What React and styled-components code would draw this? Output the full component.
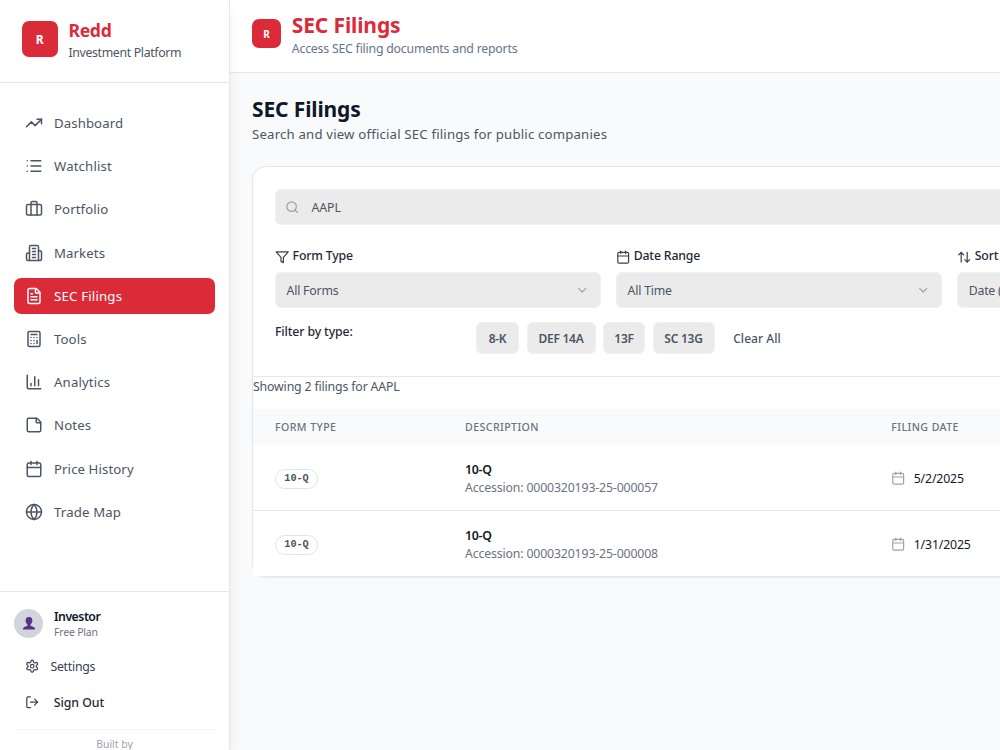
import styled, { createGlobalStyle } from "styled-components";
import {
  ArrowUpDown,
  Briefcase,
  Calculator,
  Calendar,
  ChevronDown,
  FileText,
  Globe,
  List,
  LogOut,
  Search,
  StickyNote,
  TrendingUp,
} from "lucide-react";

const GlobalStyle = createGlobalStyle`
  * {
    box-sizing: border-box;
  }

  body {
    margin: 0;
    background: #f9fafb;
    font-family: "Noto Sans", "Open Sans", sans-serif;
    overflow: hidden;
  }

  p, h1, h2 {
    margin: 0;
  }

  button {
    font-family: inherit;
  }

  svg {
    display: block;
    flex-shrink: 0;
  }
`;

const Text = styled.p`
  font-size: ${({ $size }) => $size || 12.3}px;
  line-height: ${({ $line }) => $line || 18}px;
  font-weight: ${({ $weight }) => $weight || 400};
  color: ${({ $color }) => $color || "#4b5563"};
  letter-spacing: ${({ $track }) => $track || 0}px;
  white-space: nowrap;
`;

const Page = styled.div`
  display: flex;
  height: 750px;
  overflow: hidden;
`;

const Sidebar = styled.aside`
  display: flex;
  flex-direction: column;
  flex: 0 0 230px;
  background: #fff;
  border-right: 1px solid #e5e7eb;
  box-shadow: 0 9px 14px -3px rgba(0, 0, 0, 0.1);
  z-index: 1;
`;

const Brand = styled.div`
  display: flex;
  align-items: flex-start;
  gap: 10.8px;
  height: 83px;
  padding: 21px 21.6px 0;
  border-bottom: 1px solid #e5e7eb;
`;

const Logo = styled.div`
  display: flex;
  align-items: center;
  justify-content: center;
  flex-shrink: 0;
  width: ${({ $size }) => $size}px;
  height: ${({ $size }) => $size}px;
  border-radius: 7px;
  background: #db2b39;
  color: #fff;
  font-size: ${({ $font }) => $font}px;
  font-weight: 700;
`;

const Nav = styled.nav`
  display: flex;
  flex-direction: column;
  flex: 1;
  gap: 7.2px;
  padding: 22.05px 14px;
`;

const NavItem = styled.a`
  display: flex;
  align-items: center;
  gap: 11px;
  height: 36px;
  padding: 0 11px;
  border-radius: 7px;
  font-size: 13.2px;
  letter-spacing: ${({ $track }) => $track || 0}px;
  color: ${({ $active }) => ($active ? "#fff" : "#4b5563")};
  background: ${({ $active }) => ($active ? "#db2b39" : "transparent")};
`;

const SidebarFooter = styled.div`
  height: 159px;
  padding: 16px 14px 0;
  border-top: 1px solid #e5e7eb;
`;

const User = styled.div`
  display: flex;
  gap: 11px;
  height: 40px;
`;

const Avatar = styled.div`
  display: flex;
  align-items: center;
  justify-content: center;
  width: 29px;
  height: 29px;
  margin-top: 1px;
  border-radius: 50%;
  background: #d1d5db;
`;

const FooterLink = styled.div`
  display: flex;
  align-items: center;
  gap: ${({ $gap }) => $gap}px;
  height: 36px;
  padding-left: 11px;
  color: #374151;

  ${Text} {
    padding-top: 1px;
  }
`;

const BuiltBy = styled.div`
  margin-top: 9px;
  padding-top: 5px;
  border-top: 1px solid #f3f4f6;
  text-align: center;
`;

const Main = styled.main`
  flex: 1 0 1030px;
`;

const TopBar = styled.header`
  display: flex;
  gap: 10.8px;
  height: 73px;
  padding: 12px 22px 0;
  background: #fff;
  border-bottom: 1px solid #e5e7eb;

  ${Logo} {
    margin-top: 7px;
  }
`;

const Content = styled.section`
  padding: 21px 22px;
`;

const Card = styled.div`
  height: 411px;
  margin-top: 22px;
  border: 1px solid #e5e7eb;
  border-radius: 14px;
  background: #fff;
  box-shadow: 0 1px 2px rgba(0, 0, 0, 0.07);
`;

const Filters = styled.div`
  height: 210px;
  padding: 22px;
  border-bottom: 1px solid #e5e7eb;
`;

const Field = styled.div`
  display: flex;
  align-items: center;
  justify-content: space-between;
  height: 36px;
  padding: 0 11px 0 10.5px;
  border: 1px solid #f1f1f1;
  border-radius: 6px;
  background: #ebebeb;
  color: #9ca3af;

  ${Text} {
    padding-top: 2px;
  }
`;

const SearchField = styled(Field)`
  justify-content: flex-start;
  gap: 12px;
  padding: 0 9px;
`;

const FieldGrid = styled.div`
  display: grid;
  grid-template-columns: repeat(3, 326.4px);
  gap: 14.7px;
  margin-top: 22px;
`;

const Label = styled.div`
  display: flex;
  align-items: center;
  gap: 3.2px;
  height: 18px;
  margin-bottom: 7px;
  color: #374151;

  svg {
    margin-top: 3px;
  }
`;

const Chips = styled.div`
  display: grid;
  grid-template-columns: 201px 1fr;
  margin-top: 14px;

  ${Text} {
    padding-top: 1px;
  }
`;

const ChipList = styled.div`
  display: flex;
  gap: 7.5px;
`;

const Chip = styled.button`
  width: ${({ $width }) => $width}px;
  height: 32px;
  padding: 0;
  border: 1px solid ${({ $plain }) => ($plain ? "transparent" : "#f1f1f1")};
  border-radius: 6px;
  background: ${({ $plain }) => ($plain ? "transparent" : "#ebebeb")};
  color: #4b5563;
  font-size: 12px;
  font-weight: ${({ $plain }) => ($plain ? 500 : 600)};
  letter-spacing: ${({ $plain }) => ($plain ? 0.05 : -0.25)}px;
  white-space: nowrap;
`;

const Row = styled.div`
  display: grid;
  grid-template-columns: 190px 426.3px 1fr;
  align-items: center;
  height: 66px;
  padding: 0 22px;
  background: #fff;
  border-bottom: 1px solid #e5e7eb;

  &:last-child {
    height: 65px;
    border-bottom: 0;
  }
`;

const HeadRow = styled(Row)`
  height: 36px;
  margin-top: 13px;
  background: #f9fafb;
  border-bottom: 0;
`;

const Badge = styled.span`
  display: flex;
  align-items: center;
  justify-content: center;
  width: 43px;
  height: 20px;
  margin-top: 2px;
  border: 1px solid #e2e4e6;
  border-radius: 10px;
  color: #4b5563;
  font: 700 10.2px "Liberation Mono", monospace;
`;

const Description = styled.div`
  padding-top: 2px;
`;

const DateCell = styled.div`
  display: flex;
  align-items: center;
  gap: 8px;
  padding-top: 1px;
  color: #9ca3af;

  ${Text} {
    padding-top: 1px;
  }
`;

const FunnelIcon = () => (
  <svg width="14.4" height="14.4" viewBox="0 0 24 24" fill="none" stroke="currentColor" strokeWidth="2" strokeLinejoin="round">
    <polygon points="22 3 2 3 10 12.46 10 19 14 21 14 12.46 22 3" />
  </svg>
);

const GearIcon = () => (
  <svg width="14.4" height="14.4" viewBox="0 0 24 24" fill="none" stroke="currentColor" strokeWidth="2" strokeLinecap="round" strokeLinejoin="round">
    <path d="M12.22 2h-.44a2 2 0 0 0-2 2v.18a2 2 0 0 1-1 1.73l-.43.25a2 2 0 0 1-2 0l-.15-.08a2 2 0 0 0-2.73.73l-.22.38a2 2 0 0 0 .73 2.73l.15.1a2 2 0 0 1 1 1.72v.51a2 2 0 0 1-1 1.74l-.15.09a2 2 0 0 0-.73 2.73l.22.38a2 2 0 0 0 2.73.73l.15-.08a2 2 0 0 1 2 0l.43.25a2 2 0 0 1 1 1.73V20a2 2 0 0 0 2 2h.44a2 2 0 0 0 2-2v-.18a2 2 0 0 1 1-1.73l.43-.25a2 2 0 0 1 2 0l.15.08a2 2 0 0 0 2.73-.73l.22-.39a2 2 0 0 0-.73-2.73l-.15-.08a2 2 0 0 1-1-1.74v-.5a2 2 0 0 1 1-1.74l.15-.09a2 2 0 0 0 .73-2.73l-.22-.38a2 2 0 0 0-2.73-.73l-.15.08a2 2 0 0 1-2 0l-.43-.25a2 2 0 0 1-1-1.73V4a2 2 0 0 0-2-2z" />
    <circle cx="12" cy="12" r="3" />
  </svg>
);

const PersonIcon = () => (
  <svg width="12" height="13" viewBox="0 0 12 13" fill="#553285">
    <path d="M6 0C3.8 0 2.8 1.3 2.8 3.1c-.6.3-.3 1.5.2 1.8.2 1.3.8 2 1.5 2.6v1.2L1.3 10C.4 10.4 0 11.2 0 12.5h12c0-1.3-.4-2.1-1.3-2.5L7.5 8.7V7.5c.7-.6 1.3-1.3 1.5-2.6.5-.3.8-1.5.2-1.8C9.2 1.3 8.2 0 6 0z" />
  </svg>
);

const BarsIcon = ({ size }) => (
  <svg width={size} height={size} viewBox="0 0 24 24" fill="none" stroke="currentColor" strokeWidth="2" strokeLinecap="round" strokeLinejoin="round">
    <path d="M3 3v16a2 2 0 0 0 2 2h16M18 17V9M13 17V5M8 17v-3" />
  </svg>
);

const BuildingIcon = ({ size }) => (
  <svg width={size} height={size} viewBox="0 0 24 24" fill="none" stroke="currentColor" strokeWidth="2" strokeLinecap="round" strokeLinejoin="round">
    <path d="M6 22V4a2 2 0 0 1 2-2h8a2 2 0 0 1 2 2v18Z" />
    <path d="M6 12H4a2 2 0 0 0-2 2v6a2 2 0 0 0 2 2h2M18 9h2a2 2 0 0 1 2 2v9a2 2 0 0 1-2 2h-2" />
    <path d="M10 6h4M10 10h4M10 14h4M10 18h4" />
  </svg>
);

const navItems = [
  { label: "Dashboard", icon: TrendingUp, track: 0.1 },
  { label: "Watchlist", icon: List, track: 0.15 },
  { label: "Portfolio", icon: Briefcase, track: 0.1 },
  { label: "Markets", icon: BuildingIcon, track: 0.1 },
  { label: "SEC Filings", icon: FileText, track: 0.2, active: true },
  { label: "Tools", icon: Calculator, track: 0.1 },
  { label: "Analytics", icon: BarsIcon, track: 0.15 },
  { label: "Notes", icon: StickyNote, track: 0.15 },
  { label: "Price History", icon: Calendar, track: 0.1 },
  { label: "Trade Map", icon: Globe, track: 0.15 },
];

const fields = [
  { label: "Form Type", value: "All Forms", icon: FunnelIcon },
  { label: "Date Range", value: "All Time", icon: Calendar },
  { label: "Sort By", value: "Date (Newest)", icon: ArrowUpDown },
];

const columns = ["FORM TYPE", "DESCRIPTION", "FILING DATE"];

const filings = [
  { form: "10-Q", accession: "0000320193-25-000057", date: "5/2/2025" },
  { form: "10-Q", accession: "0000320193-25-000008", date: "1/31/2025" },
];

const App = () => {
  return (
    <Page>
      <GlobalStyle />
      <Sidebar>
        <Brand>
          <Logo $size={36} $font={12}>R</Logo>
          <div>
            <Text as="h2" $size={17.6} $line={19} $weight={700} $color="#db2b39" $track={-0.3}>Redd</Text>
            <Text $line={25} $track={-0.33}>Investment Platform</Text>
          </div>
        </Brand>
        <Nav>
          {navItems.map(({ label, icon: Icon, active, track }) => (
            <NavItem key={label} $active={active} $track={track}>
              <Icon size={18} />
              {label}
            </NavItem>
          ))}
        </Nav>
        <SidebarFooter>
          <User>
            <Avatar>
              <PersonIcon />
            </Avatar>
            <div>
              <Text $weight={600} $color="#111827" $track={-0.5}>Investor</Text>
              <Text $size={10.4} $line={13} $color="#6b7280" $track={-0.15}>Free Plan</Text>
            </div>
          </User>
          <FooterLink $gap={11}>
            <GearIcon />
            <Text $color="#374151" $track={-0.25}>Settings</Text>
          </FooterLink>
          <FooterLink $gap={14.4}>
            <LogOut size={14.4} />
            <Text $weight={500} $color="#1f2937" $track={-0.05}>Sign Out</Text>
          </FooterLink>
          <BuiltBy>
            <Text $size={10.4} $color="#9ca3af">Built by</Text>
          </BuiltBy>
        </SidebarFooter>
      </Sidebar>
      <Main>
        <TopBar>
          <Logo $size={29} $font={10}>R</Logo>
          <div>
            <Text as="h1" $size={21} $line={26} $weight={700} $color="#db2b39" $track={-0.13}>SEC Filings</Text>
            <Text $line={21} $color="#64748b" $track={-0.21}>Access SEC filing documents and reports</Text>
          </div>
        </TopBar>
        <Content>
          <Text as="h2" $size={21} $line={30} $weight={700} $color="#0f172a" $track={-0.13}>SEC Filings</Text>
          <Text $size={13.2} $line={20} $track={0.185}>Search and view official SEC filings for public companies</Text>
          <Card>
            <Filters>
              <SearchField>
                <Search size={14.4} />
                <Text $track={-0.05}>AAPL</Text>
              </SearchField>
              <FieldGrid>
                {fields.map(({ label, value, icon: Icon }) => (
                  <div key={label}>
                    <Label>
                      <Icon size={14.4} />
                      <Text $weight={500} $color="#1f2937" $track={-0.17}>{label}</Text>
                    </Label>
                    <Field>
                      <Text $track={-0.2}>{value}</Text>
                      <ChevronDown size={14.4} />
                    </Field>
                  </div>
                ))}
              </FieldGrid>
              <Chips>
                <Text $weight={500} $color="#1f2937" $track={-0.13}>Filter by type:</Text>
                <ChipList>
                  <Chip $width={43}>8-K</Chip>
                  <Chip $width={69}>DEF 14A</Chip>
                  <Chip $width={42}>13F</Chip>
                  <Chip $width={62}>SC 13G</Chip>
                  <Chip $width={70} $plain>Clear All</Chip>
                </ChipList>
              </Chips>
            </Filters>
            <Text $line={19} $track={-0.15}>Showing 2 filings for AAPL</Text>
            <HeadRow>
              {columns.map((column) => (
                <Text key={column} $size={10.6} $weight={500} $color="#6b7280" $track={0.42}>{column}</Text>
              ))}
            </HeadRow>
            {filings.map(({ form, accession, date }) => (
              <Row key={accession}>
                <Badge>{form}</Badge>
                <Description>
                  <Text $weight={600} $color="#111827" $track={-0.25}>{form}</Text>
                  <Text $color="#6b7280" $track={-0.15}>Accession: {accession}</Text>
                </Description>
                <DateCell>
                  <Calendar size={14.4} />
                  <Text $color="#111827" $track={-0.15}>{date}</Text>
                </DateCell>
              </Row>
            ))}
          </Card>
        </Content>
      </Main>
    </Page>
  );
};

export default App;
